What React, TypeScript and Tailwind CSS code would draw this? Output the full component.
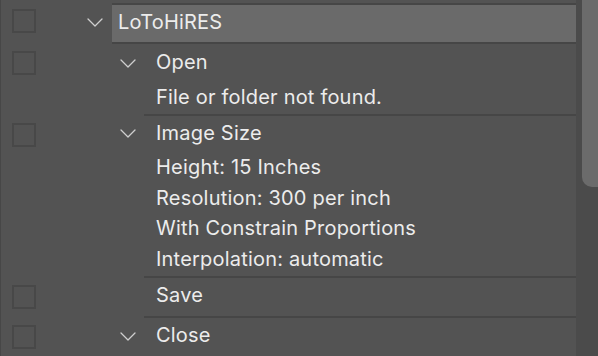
const Chevron = () => (
  <svg width="16" height="9" viewBox="0 0 16 9" fill="none" className="block">
    <polyline points="1,1 8,8 15,1" stroke="#cfcfcf" strokeWidth="1.3" strokeLinecap="round" strokeLinejoin="round" />
  </svg>
);

const Check = ({ first }: { first?: boolean }) => (
  <div className={`${first ? 'pt-[6px]' : 'pt-[7px]'} pl-[11px] w-[47px] shrink-0`}>
    <div className="w-[24px] h-[24px] border-2 border-[#484848]" />
  </div>
);

const Line = ({ children, h = 'h-[31px]' }: { children: React.ReactNode; h?: string }) => (
  <div className={`${h} flex items-center pl-[12px] pb-[4px]`}>{children}</div>
);

export default function App() {
  return (
    <div
      className="w-[598px] h-[356px] overflow-hidden flex bg-[#535353] text-[#ececec] text-[20px] tracking-[0.2px] border-l border-[#474747]"
      style={{ fontFamily: 'Inter, "Liberation Sans", sans-serif' }}
    >
      <div className="flex-1 pt-[3px]">
        {/* Action set */}
        <div className="flex">
          <Check first />
          <div className="w-[64px] flex justify-end items-start pt-[15px] pr-[9px]">
            <Chevron />
          </div>
          <div className="flex-1 h-[41px] border-y-2 border-[#464646] bg-[#6a6a6a] flex items-center pl-[6px] pb-[3px]">
            LoToHiRES
          </div>
        </div>

        {/* Open */}
        <div className="flex">
          <Check />
          <div className="w-[64px]" />
          <div className="w-[32px] pt-[15px] pl-[8px]">
            <Chevron />
          </div>
          <div className="flex-1 border-b-2 border-[#464646]">
            <Line h="h-[39px]">Open</Line>
            <Line>File or folder not found.</Line>
          </div>
        </div>

        {/* Image Size */}
        <div className="flex">
          <Check />
          <div className="w-[64px]" />
          <div className="w-[32px] pt-[13px] pl-[8px]">
            <Chevron />
          </div>
          <div className="flex-1 border-b-2 border-[#464646]">
            <Line h="h-[37px]">Image Size</Line>
            <Line>Height: 15 Inches</Line>
            <Line>Resolution: 300 per inch</Line>
            <Line h="h-[30px]">With Constrain Proportions</Line>
            <Line>Interpolation: automatic</Line>
          </div>
        </div>

        {/* Save */}
        <div className="flex">
          <Check />
          <div className="w-[96px]" />
          <div className="flex-1 border-b-2 border-[#464646]">
            <Line h="h-[38px]">Save</Line>
          </div>
        </div>

        {/* Close */}
        <div className="flex">
          <Check />
          <div className="w-[64px]" />
          <div className="w-[32px] pt-[14px] pl-[8px]">
            <Chevron />
          </div>
          <div className="flex-1">
            <Line h="h-[38px]">Close</Line>
          </div>
        </div>
      </div>

      {/* Scrollbar */}
      <div className="w-[22px] shrink-0 bg-[#4b4b4b] pl-[6px]">
        <div className="h-[187px] bg-[#6b6b6b] rounded-bl-[10px]" />
      </div>
    </div>
  );
}
